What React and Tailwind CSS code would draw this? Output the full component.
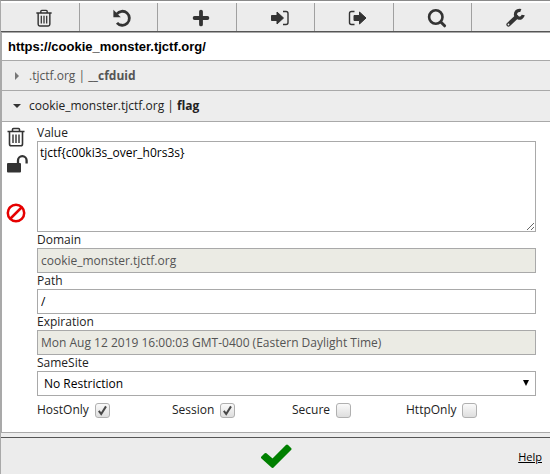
import React from "react";

function Icon({ size = "size-5", children, ...rest }) {
  return (
    <svg viewBox="0 0 20 20" className={`${size} block shrink-0`} fill="none" aria-hidden="true" {...rest}>
      {children}
    </svg>
  );
}

function TrashIcon({ size }) {
  return (
    <Icon size={size} stroke="#333" strokeWidth="1.6">
      <path d="M1.500 4.500h17M6.500 4.500V2.500q0-1 1-1h5q1 0 1 1v2M3.500 5v12q0 1.800 1.800 1.800h9.400q1.800 0 1.800-1.800V5" />
      <path d="M7 7.500v8.500M10 7.500v8.500M13 7.500v8.500" strokeWidth="1.400" />
    </Icon>
  );
}

function UndoIcon() {
  return (
    <Icon>
      <path d="M4.800 6A7 7 0 1 1 5 14.800" stroke="#333" strokeWidth="2.800" />
      <path d="M1.400 1.800v7.400h7.400z" fill="#333" />
    </Icon>
  );
}

function PlusIcon() {
  return (
    <Icon>
      <path d="M10 3.600v12.800M3.600 10h12.800" stroke="#333" strokeWidth="3.800" strokeLinecap="round" />
    </Icon>
  );
}

function ImportIcon() {
  return (
    <Icon>
      <path d="M1.500 7.500H7V4l6.500 6L7 16v-3.500H1.500z" fill="#333" stroke="#333" strokeLinejoin="round" />
      <path d="M13 3.500h3q2 0 2 2v9q0 2-2 2h-3" stroke="#333" strokeWidth="1.400" />
    </Icon>
  );
}

function ExportIcon() {
  return (
    <Icon>
      <path d="M6 7.500h5.500V4l6.500 6-6.500 6v-3.500H6z" fill="#333" stroke="#333" strokeLinejoin="round" />
      <path d="M6.500 3.500h-3q-2 0-2 2v9q0 2 2 2h3" stroke="#333" strokeWidth="1.400" />
    </Icon>
  );
}

function SearchIcon() {
  return (
    <Icon stroke="#333">
      <circle cx="8.800" cy="9" r="6.700" strokeWidth="2.600" />
      <path d="M13.800 14l3.800 3.800" strokeWidth="3" strokeLinecap="round" />
    </Icon>
  );
}

function WrenchIcon() {
  return (
    <Icon stroke="#333">
      <path d="M3.500 16.500L11.500 9" strokeWidth="4.200" strokeLinecap="round" />
      <path d="M15.800 2.600A3.900 3.900 0 1 0 18.200 7" strokeWidth="3.200" />
      <circle cx="3.500" cy="16.500" r="0.900" fill="#ececec" stroke="none" />
    </Icon>
  );
}

function UnlockIcon() {
  return (
    <svg viewBox="0 0 22 18" className="block h-[18px] w-[22px]" fill="none" aria-hidden="true">
      <rect x="1" y="8" width="14" height="9.500" rx="1" fill="#333" />
      <path d="M12 8.500V5.500a4.300 4.300 0 0 1 8.600 0v3" stroke="#333" strokeWidth="2.300" />
    </svg>
  );
}

function BlockIcon() {
  return (
    <Icon stroke="#e60000" strokeWidth="2.500">
      <circle cx="10" cy="10" r="8.200" />
      <path d="M4.500 15.500l11-11" />
    </Icon>
  );
}

const tools = [
  ["Delete all", TrashIcon, "size-[18px]"],
  ["Reset", UndoIcon],
  ["Add", PlusIcon],
  ["Import", ImportIcon],
  ["Export", ExportIcon],
  ["Search", SearchIcon],
  ["Options", WrenchIcon],
];

const flags = [
  ["HostOnly", true],
  ["Session", true],
  ["Secure", false],
  ["HttpOnly", false],
];

const labelClass = "block h-4 leading-4";
const boxClass = "block h-[25px] w-full border border-[#a9a9a9] px-[3px]";

function Field({ id, label, value, disabled }) {
  return (
    <div>
      <label htmlFor={id} className={labelClass}>{label}</label>
      <input
        id={id}
        defaultValue={value}
        disabled={disabled}
        className={`${boxClass} bg-white text-black disabled:bg-[#ebebe4] disabled:text-[#545454]`}
      />
    </div>
  );
}

function Flag({ label, checked }) {
  return (
    <label className="flex items-center gap-1.5">
      {label}
      <span className="relative size-[15px]">
        <input
          type="checkbox"
          defaultChecked={checked}
          className="peer block size-[15px] appearance-none rounded-[3px] border border-[#b0b0b0] bg-linear-to-b from-[#fafafa] to-[#dedede]"
        />
        <svg viewBox="0 0 15 15" fill="none" className="pointer-events-none absolute inset-0 hidden size-[15px] peer-checked:block" aria-hidden="true">
          <path d="M3.800 7.800l2.400 3.200 4.800-7.600" stroke="#484848" strokeWidth="2" />
        </svg>
      </span>
    </label>
  );
}

export default function App() {
  return (
    <div className="border-t border-l border-t-[#8a8a8a] border-l-[#a9a9a9] bg-white pt-0.5 font-['Open_Sans','Noto_Sans',sans-serif] text-[12px] text-[#222]">
      <div className="flex h-[29px] border-b border-[#555] bg-[#ececec]">
        {tools.map(([name, Glyph, size]) => (
          <button key={name} type="button" aria-label={name} className="flex flex-1 items-center justify-center border-r border-[#a0a0a0] pt-px pl-2 last:border-r-0">
            <Glyph size={size} />
          </button>
        ))}
      </div>

      <div className="border-l border-[#a9a9a9]">
        <h1 className="h-[29px] border-y border-[#a9a9a9] px-1.5 font-['Liberation_Sans',Arial,sans-serif] text-[13px] leading-[27px] font-bold text-black">
          https://cookie_monster.tjctf.org/
        </h1>
        <button type="button" className="flex h-[30px] w-full items-center border-b border-[#a9a9a9] bg-[#ededed] text-[#555]">
          <svg viewBox="0 0 10 10" className="mr-[7px] ml-2.5 size-2.5" aria-hidden="true">
            <path d="M3 1l4 4-4 4z" fill="#777" />
          </svg>
          <span>.tjctf.org | <b>__cfduid</b></span>
        </button>
        <button type="button" className="flex h-[31px] w-full items-center border-b border-[#a9a9a9] bg-[#ededed] text-[#222]">
          <svg viewBox="0 0 10 10" className="mr-[7px] ml-2.5 size-2.5" aria-hidden="true">
            <path d="M1 3h8L5 7z" fill="#333" />
          </svg>
          <span>cookie_monster.tjctf.org | <b>flag</b></span>
        </button>

        <div className="flex border-b border-[#a9a9a9] pt-[3px] pr-3.5 pb-3.5">
          <div className="flex w-[35px] shrink-0 flex-col items-start pt-0.5 pl-1">
            <button type="button" aria-label="Delete cookie"><TrashIcon /></button>
            <button type="button" aria-label="Protect cookie" className="mt-2"><UnlockIcon /></button>
            <button type="button" aria-label="Block cookie" className="mt-[30px]"><BlockIcon /></button>
          </div>
          <div className="min-w-0 flex-1">
            <label htmlFor="value" className={labelClass}>Value</label>
            <textarea id="value" defaultValue="tjctf{c00ki3s_over_h0rs3s}" className="block h-[91px] w-full resize-y border border-[#a9a9a9] bg-white px-0.5 py-[3px] leading-4 text-black" />
            <Field id="domain" label="Domain" value="cookie_monster.tjctf.org" disabled />
            <Field id="path" label="Path" value="/" />
            <Field id="expiration" label="Expiration" value="Mon Aug 12 2019 16:00:03 GMT-0400 (Eastern Daylight Time)" disabled />
            <label htmlFor="samesite" className={labelClass}>SameSite</label>
            <div className="relative">
              <select id="samesite" className="block h-[25px] w-full appearance-none border border-[#a9a9a9] bg-white px-1.5 text-black">
                <option>No Restriction</option>
              </select>
              <svg viewBox="0 0 6 6" className="pointer-events-none absolute top-[9px] right-[7px] size-1.5" aria-hidden="true">
                <path d="M0 0h6L3 6z" fill="#000" />
              </svg>
            </div>
            <div className="mt-1.5 grid grid-cols-[135fr_120fr_114fr_130fr] leading-4">
              {flags.map(([label, checked]) => (
                <Flag key={label} label={label} checked={checked} />
              ))}
            </div>
          </div>
        </div>
      </div>

      <div className="h-1 bg-[#ededed]" />
      <footer className="grid h-[37px] grid-cols-[1fr_auto_1fr] items-center border-t border-[#555] bg-[#ececec]">
        <span />
        <button type="button" aria-label="Save">
          <svg viewBox="0 0 32 26" className="block h-[26px] w-8" aria-hidden="true">
            <path d="M2.500 14.500L5.500 11.500L12.500 17.500L27 3L30 6L12.500 23.500z" fill="#008000" stroke="#008000" strokeWidth="3" strokeLinejoin="round" />
          </svg>
        </button>
        <a href="#help" className="justify-self-end pt-0.5 pr-2 text-[11px] text-black underline">Help</a>
      </footer>
    </div>
  );
}
